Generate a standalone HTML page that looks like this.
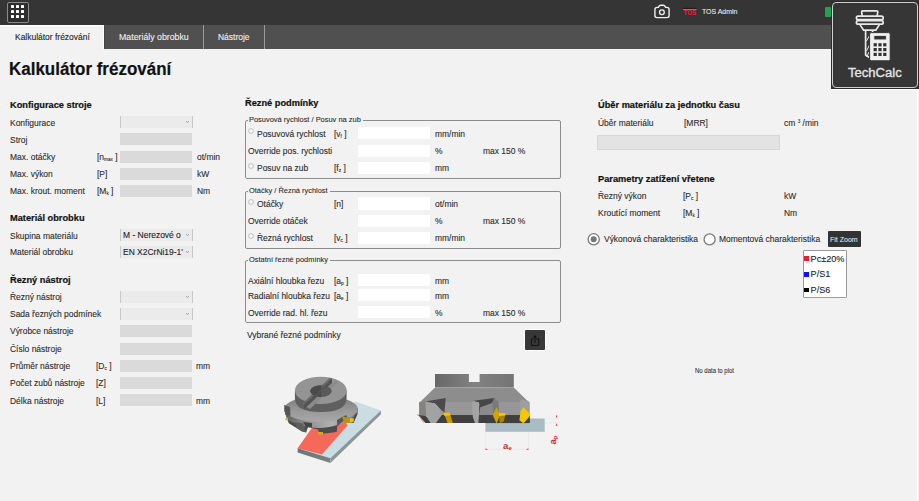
<!DOCTYPE html>
<html><head><meta charset="utf-8"><style>
html,body{margin:0;padding:0;width:919px;height:501px;overflow:hidden;background:#f2f2f2;}
body{position:relative;font-family:"Liberation Sans",sans-serif;}
.t{position:absolute;white-space:nowrap;transform-origin:0 0;-webkit-text-stroke:0.1px currentColor;}
.r{position:absolute;}
sub{font-size:55%;vertical-align:-1px;line-height:0;}
sup{font-size:55%;vertical-align:3px;line-height:0;}
svg{overflow:visible}
</style></head><body>
<div class="r" style="left:0.00px;top:0.00px;width:919.00px;height:24.50px;background:#353535;"></div>
<div class="r" style="left:0.00px;top:24.50px;width:919.00px;height:24.00px;background:#505050;"></div>
<div class="r" style="left:7.00px;top:1.50px;width:22.00px;height:21.00px;border:1.3px solid #8a8a8a;border-radius:2px;box-sizing:border-box;background:#2e2e2e;"></div>
<div class="r" style="left:11.00px;top:5.00px;width:3.00px;height:3.00px;background:#fff;border-radius:0.6px;"></div>
<div class="r" style="left:11.00px;top:10.00px;width:3.00px;height:3.00px;background:#fff;border-radius:0.6px;"></div>
<div class="r" style="left:11.00px;top:15.00px;width:3.00px;height:3.00px;background:#fff;border-radius:0.6px;"></div>
<div class="r" style="left:16.00px;top:5.00px;width:3.00px;height:3.00px;background:#fff;border-radius:0.6px;"></div>
<div class="r" style="left:16.00px;top:10.00px;width:3.00px;height:3.00px;background:#fff;border-radius:0.6px;"></div>
<div class="r" style="left:16.00px;top:15.00px;width:3.00px;height:3.00px;background:#fff;border-radius:0.6px;"></div>
<div class="r" style="left:21.00px;top:5.00px;width:3.00px;height:3.00px;background:#fff;border-radius:0.6px;"></div>
<div class="r" style="left:21.00px;top:10.00px;width:3.00px;height:3.00px;background:#fff;border-radius:0.6px;"></div>
<div class="r" style="left:21.00px;top:15.00px;width:3.00px;height:3.00px;background:#fff;border-radius:0.6px;"></div>
<div class="r" style="left:0.00px;top:24.50px;width:104.30px;height:24.10px;background:#f2f2f2;border-top:1px solid #fff;border-right:1px solid #fff;box-sizing:border-box;"></div>
<div class="r" style="left:104.30px;top:24.50px;width:1.20px;height:24.10px;background:#454545;"></div>
<div class="r" style="left:203.00px;top:24.50px;width:1.00px;height:24.00px;background:#9a9a9a;"></div>
<div class="r" style="left:264.00px;top:24.50px;width:1.00px;height:24.00px;background:#9a9a9a;"></div>
<div class="t" style="left:14.70px;top:31.78px;font-size:9px;line-height:10.8px;color:#222;transform:scaleX(0.94);">Kalkulátor frézování</div>
<div class="t" style="left:118.70px;top:31.78px;font-size:9px;line-height:10.8px;color:#f0f0f0;transform:scaleX(0.975);">Materiály obrobku</div>
<div class="t" style="left:218.20px;top:31.78px;font-size:9px;line-height:10.8px;color:#f0f0f0;transform:scaleX(0.94);">Nástroje</div>
<div class="r" style="left:0.00px;top:48.50px;width:919.00px;height:452.50px;background:#f2f2f2;"></div>
<div class="r" style="left:917.00px;top:89.00px;width:1.00px;height:412.00px;background:#ffffff;"></div>
<div class="r" style="left:830.00px;top:89.00px;width:89.00px;height:1.00px;background:#ffffff;"></div>
<div class="t" style="left:8.80px;top:59.06px;font-size:18px;line-height:21.6px;font-weight:bold;-webkit-text-stroke:0.2px currentColor;color:#111;transform:scaleX(0.943);">Kalkulátor frézování</div>
<div class="t" style="left:10.40px;top:98.82px;font-size:9.7px;line-height:11.64px;font-weight:bold;-webkit-text-stroke:0.2px currentColor;color:#111;transform:scaleX(0.955);">Konfigurace stroje</div>
<div class="t" style="left:10.30px;top:117.58px;font-size:9px;line-height:10.8px;color:#2b2b2b;transform:scaleX(0.94);">Konfigurace</div>
<div class="r" style="left:120.30px;top:116.30px;width:72.30px;height:12.00px;background:#ebebeb;border-left:1px solid #c8c8c8;border-right:1px solid #c8c8c8;box-sizing:border-box;"></div>
<div class="r" style="left:186px;top:121.30px;width:3px;height:2px;"><svg width="3" height="2" style="display:block"><path d="M0 0 L1.5 1.6 L3 0" stroke="#888" stroke-width="0.7" fill="none"/></svg></div>
<div class="t" style="left:10.30px;top:134.68px;font-size:9px;line-height:10.8px;color:#2b2b2b;transform:scaleX(0.94);">Stroj</div>
<div class="r" style="left:120.30px;top:133.40px;width:72.10px;height:12.00px;background:#dadada;"></div>
<div class="t" style="left:10.30px;top:152.08px;font-size:9px;line-height:10.8px;color:#2b2b2b;transform:scaleX(0.94);">Max. otáčky</div>
<div class="t" style="left:96.70px;top:152.08px;font-size:9px;line-height:10.8px;color:#2b2b2b;transform:scaleX(0.94);">[n<sub>max</sub> ]</div>
<div class="t" style="left:197.10px;top:152.08px;font-size:9px;line-height:10.8px;color:#2b2b2b;transform:scaleX(0.94);">ot/min</div>
<div class="r" style="left:120.30px;top:150.80px;width:72.10px;height:12.00px;background:#dadada;"></div>
<div class="t" style="left:10.30px;top:169.08px;font-size:9px;line-height:10.8px;color:#2b2b2b;transform:scaleX(0.94);">Max. výkon</div>
<div class="t" style="left:96.70px;top:169.08px;font-size:9px;line-height:10.8px;color:#2b2b2b;transform:scaleX(0.94);">[P]</div>
<div class="t" style="left:197.10px;top:169.08px;font-size:9px;line-height:10.8px;color:#2b2b2b;transform:scaleX(0.94);">kW</div>
<div class="r" style="left:120.30px;top:167.80px;width:72.10px;height:12.00px;background:#dadada;"></div>
<div class="t" style="left:10.30px;top:186.38px;font-size:9px;line-height:10.8px;color:#2b2b2b;transform:scaleX(0.94);">Max. krout. moment</div>
<div class="t" style="left:96.70px;top:186.38px;font-size:9px;line-height:10.8px;color:#2b2b2b;transform:scaleX(0.94);">[M<sub>k</sub> ]</div>
<div class="t" style="left:197.10px;top:186.38px;font-size:9px;line-height:10.8px;color:#2b2b2b;transform:scaleX(0.94);">Nm</div>
<div class="r" style="left:120.30px;top:185.10px;width:72.10px;height:12.00px;background:#dadada;"></div>
<div class="t" style="left:10.40px;top:212.32px;font-size:9.7px;line-height:11.64px;font-weight:bold;-webkit-text-stroke:0.2px currentColor;color:#111;transform:scaleX(0.955);">Materiál obrobku</div>
<div class="t" style="left:10.30px;top:230.68px;font-size:9px;line-height:10.8px;color:#2b2b2b;transform:scaleX(0.94);">Skupina materiálu</div>
<div class="r" style="left:120.30px;top:229.40px;width:72.30px;height:12.00px;background:#ebebeb;border-left:1px solid #c8c8c8;border-right:1px solid #c8c8c8;box-sizing:border-box;"></div>
<div class="r" style="left:186px;top:234.40px;width:3px;height:2px;"><svg width="3" height="2" style="display:block"><path d="M0 0 L1.5 1.6 L3 0" stroke="#888" stroke-width="0.7" fill="none"/></svg></div>
<div class="t" style="left:122.50px;top:230.08px;font-size:9px;line-height:10.8px;color:#222;transform:scaleX(0.94);">M - Nerezové o</div>
<div class="t" style="left:10.30px;top:247.38px;font-size:9px;line-height:10.8px;color:#2b2b2b;transform:scaleX(0.94);">Materiál obrobku</div>
<div class="r" style="left:120.30px;top:246.10px;width:72.30px;height:12.00px;background:#ebebeb;border-left:1px solid #c8c8c8;border-right:1px solid #c8c8c8;box-sizing:border-box;"></div>
<div class="r" style="left:186px;top:251.10px;width:3px;height:2px;"><svg width="3" height="2" style="display:block"><path d="M0 0 L1.5 1.6 L3 0" stroke="#888" stroke-width="0.7" fill="none"/></svg></div>
<div class="t" style="left:122.50px;top:246.78px;font-size:9px;line-height:10.8px;color:#222;transform:scaleX(0.94);">EN X2CrNi19-1'</div>
<div class="t" style="left:10.40px;top:273.82px;font-size:9.7px;line-height:11.64px;font-weight:bold;-webkit-text-stroke:0.2px currentColor;color:#111;transform:scaleX(0.955);">Řezný nástroj</div>
<div class="t" style="left:10.30px;top:292.03px;font-size:9px;line-height:10.8px;color:#2b2b2b;transform:scaleX(0.94);">Řezný nástroj</div>
<div class="r" style="left:120.30px;top:290.75px;width:72.30px;height:12.00px;background:#ebebeb;border-left:1px solid #c8c8c8;border-right:1px solid #c8c8c8;box-sizing:border-box;"></div>
<div class="r" style="left:186px;top:295.75px;width:3px;height:2px;"><svg width="3" height="2" style="display:block"><path d="M0 0 L1.5 1.6 L3 0" stroke="#888" stroke-width="0.7" fill="none"/></svg></div>
<div class="t" style="left:10.30px;top:309.28px;font-size:9px;line-height:10.8px;color:#2b2b2b;transform:scaleX(0.94);">Sada řezných podmínek</div>
<div class="r" style="left:120.30px;top:308.00px;width:72.30px;height:12.00px;background:#ebebeb;border-left:1px solid #c8c8c8;border-right:1px solid #c8c8c8;box-sizing:border-box;"></div>
<div class="r" style="left:186px;top:313.00px;width:3px;height:2px;"><svg width="3" height="2" style="display:block"><path d="M0 0 L1.5 1.6 L3 0" stroke="#888" stroke-width="0.7" fill="none"/></svg></div>
<div class="t" style="left:10.30px;top:326.28px;font-size:9px;line-height:10.8px;color:#2b2b2b;transform:scaleX(0.94);">Výrobce nástroje</div>
<div class="r" style="left:120.30px;top:325.00px;width:72.10px;height:12.00px;background:#dadada;"></div>
<div class="t" style="left:10.30px;top:343.78px;font-size:9px;line-height:10.8px;color:#2b2b2b;transform:scaleX(0.94);">Číslo nástroje</div>
<div class="r" style="left:120.30px;top:342.50px;width:72.10px;height:12.00px;background:#dadada;"></div>
<div class="t" style="left:10.30px;top:361.28px;font-size:9px;line-height:10.8px;color:#2b2b2b;transform:scaleX(0.94);">Průměr nástroje</div>
<div class="t" style="left:96.30px;top:361.28px;font-size:9px;line-height:10.8px;color:#2b2b2b;transform:scaleX(0.94);">[D<sub>c</sub> ]</div>
<div class="t" style="left:196.30px;top:361.28px;font-size:9px;line-height:10.8px;color:#2b2b2b;transform:scaleX(0.94);">mm</div>
<div class="r" style="left:120.30px;top:360.00px;width:72.10px;height:12.00px;background:#dadada;"></div>
<div class="t" style="left:10.30px;top:378.28px;font-size:9px;line-height:10.8px;color:#2b2b2b;transform:scaleX(0.94);">Počet zubů nástroje</div>
<div class="t" style="left:96.30px;top:378.28px;font-size:9px;line-height:10.8px;color:#2b2b2b;transform:scaleX(0.94);">[Z]</div>
<div class="r" style="left:120.30px;top:377.00px;width:72.10px;height:12.00px;background:#dadada;"></div>
<div class="t" style="left:10.30px;top:395.53px;font-size:9px;line-height:10.8px;color:#2b2b2b;transform:scaleX(0.94);">Délka nástroje</div>
<div class="t" style="left:96.30px;top:395.53px;font-size:9px;line-height:10.8px;color:#2b2b2b;transform:scaleX(0.94);">[L]</div>
<div class="t" style="left:196.30px;top:395.53px;font-size:9px;line-height:10.8px;color:#2b2b2b;transform:scaleX(0.94);">mm</div>
<div class="r" style="left:120.30px;top:394.25px;width:72.10px;height:12.00px;background:#dadada;"></div>
<div class="t" style="left:245.40px;top:96.72px;font-size:9.7px;line-height:11.64px;font-weight:bold;-webkit-text-stroke:0.2px currentColor;color:#111;transform:scaleX(0.955);">Řezné podmínky</div>
<div class="r" style="left:245.20px;top:120.30px;width:316.00px;height:58.30px;border:1px solid #8c8c8c;border-radius:2px;box-sizing:border-box;"></div>
<div class="r" style="left:248.00px;top:117.30px;width:114.70px;height:6.00px;background:#f2f2f2;"></div>
<div class="t" style="left:249.40px;top:115.33px;font-size:8px;line-height:9.6px;color:#2b2b2b;transform:scaleX(0.931);">Posuvová rychlost / Posuv na zub</div>
<svg class="r" style="left:248.30px;top:128.30px" width="6" height="6"><circle cx="3" cy="3" r="2.4" fill="#fafafa" stroke="#9a9a9a" stroke-width="0.6"/></svg>
<div class="t" style="left:256.90px;top:129.08px;font-size:9px;line-height:10.8px;color:#2b2b2b;transform:scaleX(0.94);">Posuvová rychlost</div>
<div class="t" style="left:333.80px;top:129.08px;font-size:9px;line-height:10.8px;color:#2b2b2b;transform:scaleX(0.94);">[v<sub>f</sub> ]</div>
<div class="r" style="left:358.40px;top:127.20px;width:71.60px;height:12.20px;background:#ffffff;"></div>
<div class="t" style="left:435.00px;top:129.08px;font-size:9px;line-height:10.8px;color:#2b2b2b;transform:scaleX(0.94);">mm/min</div>
<div class="t" style="left:247.90px;top:146.18px;font-size:9px;line-height:10.8px;color:#2b2b2b;transform:scaleX(0.94);">Override pos. rychlosti</div>
<div class="r" style="left:358.40px;top:144.70px;width:71.60px;height:12.20px;background:#ffffff;"></div>
<div class="t" style="left:435.00px;top:146.18px;font-size:9px;line-height:10.8px;color:#2b2b2b;transform:scaleX(0.94);">%</div>
<div class="t" style="left:482.90px;top:146.18px;font-size:9px;line-height:10.8px;color:#2b2b2b;transform:scaleX(0.94);">max 150 %</div>
<svg class="r" style="left:248.30px;top:162.60px" width="6" height="6"><circle cx="3" cy="3" r="2.4" fill="#fafafa" stroke="#9a9a9a" stroke-width="0.6"/></svg>
<div class="t" style="left:256.90px;top:163.28px;font-size:9px;line-height:10.8px;color:#2b2b2b;transform:scaleX(0.94);">Posuv na zub</div>
<div class="t" style="left:333.80px;top:163.28px;font-size:9px;line-height:10.8px;color:#2b2b2b;transform:scaleX(0.94);">[f<sub>z</sub> ]</div>
<div class="r" style="left:358.40px;top:162.00px;width:71.60px;height:12.20px;background:#ffffff;"></div>
<div class="t" style="left:435.00px;top:163.28px;font-size:9px;line-height:10.8px;color:#2b2b2b;transform:scaleX(0.94);">mm</div>
<div class="r" style="left:245.20px;top:190.80px;width:316.00px;height:57.80px;border:1px solid #8c8c8c;border-radius:2px;box-sizing:border-box;"></div>
<div class="r" style="left:248.00px;top:187.80px;width:81.60px;height:6.00px;background:#f2f2f2;"></div>
<div class="t" style="left:249.40px;top:185.83px;font-size:8px;line-height:9.6px;color:#2b2b2b;transform:scaleX(0.931);">Otáčky / Řezná rychlost</div>
<svg class="r" style="left:248.30px;top:198.50px" width="6" height="6"><circle cx="3" cy="3" r="2.4" fill="#fafafa" stroke="#9a9a9a" stroke-width="0.6"/></svg>
<div class="t" style="left:256.90px;top:199.08px;font-size:9px;line-height:10.8px;color:#2b2b2b;transform:scaleX(0.94);">Otáčky</div>
<div class="t" style="left:333.80px;top:199.08px;font-size:9px;line-height:10.8px;color:#2b2b2b;transform:scaleX(0.94);">[n]</div>
<div class="r" style="left:358.40px;top:197.40px;width:71.60px;height:12.20px;background:#ffffff;"></div>
<div class="t" style="left:435.00px;top:199.08px;font-size:9px;line-height:10.8px;color:#2b2b2b;transform:scaleX(0.94);">ot/min</div>
<div class="t" style="left:247.90px;top:215.98px;font-size:9px;line-height:10.8px;color:#2b2b2b;transform:scaleX(0.94);">Override otáček</div>
<div class="r" style="left:358.40px;top:214.50px;width:71.60px;height:12.20px;background:#ffffff;"></div>
<div class="t" style="left:435.00px;top:215.98px;font-size:9px;line-height:10.8px;color:#2b2b2b;transform:scaleX(0.94);">%</div>
<div class="t" style="left:482.90px;top:215.98px;font-size:9px;line-height:10.8px;color:#2b2b2b;transform:scaleX(0.94);">max 150 %</div>
<svg class="r" style="left:248.30px;top:233.00px" width="6" height="6"><circle cx="3" cy="3" r="2.4" fill="#fafafa" stroke="#9a9a9a" stroke-width="0.6"/></svg>
<div class="t" style="left:256.90px;top:233.38px;font-size:9px;line-height:10.8px;color:#2b2b2b;transform:scaleX(0.94);">Řezná rychlost</div>
<div class="t" style="left:333.80px;top:233.38px;font-size:9px;line-height:10.8px;color:#2b2b2b;transform:scaleX(0.94);">[v<sub>c</sub> ]</div>
<div class="r" style="left:358.40px;top:231.90px;width:71.60px;height:12.20px;background:#ffffff;"></div>
<div class="t" style="left:435.00px;top:233.38px;font-size:9px;line-height:10.8px;color:#2b2b2b;transform:scaleX(0.94);">mm/min</div>
<div class="r" style="left:245.20px;top:259.60px;width:316.00px;height:63.60px;border:1px solid #8c8c8c;border-radius:2px;box-sizing:border-box;"></div>
<div class="r" style="left:248.00px;top:256.60px;width:82.00px;height:6.00px;background:#f2f2f2;"></div>
<div class="t" style="left:249.40px;top:254.63px;font-size:8px;line-height:9.6px;color:#2b2b2b;transform:scaleX(0.931);">Ostatní řezné podmínky</div>
<div class="t" style="left:247.90px;top:276.38px;font-size:9px;line-height:10.8px;color:#2b2b2b;transform:scaleX(0.94);">Axiální hloubka řezu</div>
<div class="t" style="left:333.80px;top:276.38px;font-size:9px;line-height:10.8px;color:#2b2b2b;transform:scaleX(0.94);">[a<sub>p</sub> ]</div>
<div class="r" style="left:358.40px;top:274.30px;width:71.60px;height:12.20px;background:#ffffff;"></div>
<div class="t" style="left:435.00px;top:276.38px;font-size:9px;line-height:10.8px;color:#2b2b2b;transform:scaleX(0.94);">mm</div>
<div class="t" style="left:247.90px;top:290.98px;font-size:9px;line-height:10.8px;color:#2b2b2b;transform:scaleX(0.94);">Radialní hloubka řezu</div>
<div class="t" style="left:333.80px;top:290.98px;font-size:9px;line-height:10.8px;color:#2b2b2b;transform:scaleX(0.94);">[a<sub>e</sub> ]</div>
<div class="r" style="left:358.40px;top:289.30px;width:71.60px;height:12.20px;background:#ffffff;"></div>
<div class="t" style="left:435.00px;top:290.98px;font-size:9px;line-height:10.8px;color:#2b2b2b;transform:scaleX(0.94);">mm</div>
<div class="t" style="left:247.90px;top:308.28px;font-size:9px;line-height:10.8px;color:#2b2b2b;transform:scaleX(0.94);">Override rad. hl. řezu</div>
<div class="r" style="left:358.40px;top:306.30px;width:71.60px;height:12.20px;background:#ffffff;"></div>
<div class="t" style="left:435.00px;top:308.28px;font-size:9px;line-height:10.8px;color:#2b2b2b;transform:scaleX(0.94);">%</div>
<div class="t" style="left:482.90px;top:308.28px;font-size:9px;line-height:10.8px;color:#2b2b2b;transform:scaleX(0.94);">max 150 %</div>
<div class="t" style="left:247.40px;top:330.48px;font-size:9px;line-height:10.8px;color:#2b2b2b;transform:scaleX(0.94);">Vybrané řezné podmínky</div>
<div class="r" style="left:524.00px;top:329.00px;width:22.00px;height:22.00px;background:#ffffff;border-radius:2px;"></div>
<div class="r" style="left:525.00px;top:330.00px;width:20.00px;height:20.00px;background:#383838;border-radius:1px;"></div>
<svg class="r" style="left:525px;top:330px" width="20" height="20"><path d="M8.6 9 L6.3 9 L6.3 15.4 L13.8 15.4 L13.8 9 L11.4 9 M10 13 L10 6" stroke="#111" stroke-width="1" fill="none"/><path d="M8 7.4 L10 4.9 L12 7.4 Z" fill="#111"/></svg>
<div class="t" style="left:597.60px;top:99.32px;font-size:9.7px;line-height:11.64px;font-weight:bold;-webkit-text-stroke:0.2px currentColor;color:#111;transform:scaleX(0.955);">Úběr materiálu za jednotku času</div>
<div class="t" style="left:597.60px;top:117.78px;font-size:9px;line-height:10.8px;color:#2b2b2b;transform:scaleX(0.94);">Úběr materiálu</div>
<div class="t" style="left:683.60px;top:117.78px;font-size:9px;line-height:10.8px;color:#2b2b2b;transform:scaleX(0.94);">[MRR]</div>
<div class="t" style="left:783.70px;top:117.78px;font-size:9px;line-height:10.8px;color:#2b2b2b;transform:scaleX(0.94);">cm <sup>3</sup> /min</div>
<div class="r" style="left:597.20px;top:135.30px;width:182.60px;height:14.50px;background:#e3e3e3;border:1px solid #d6d6d6;box-sizing:border-box;"></div>
<div class="t" style="left:598.00px;top:173.02px;font-size:9.7px;line-height:11.64px;font-weight:bold;-webkit-text-stroke:0.2px currentColor;color:#111;transform:scaleX(0.955);">Parametry zatížení vřetene</div>
<div class="t" style="left:598.00px;top:190.78px;font-size:9px;line-height:10.8px;color:#2b2b2b;transform:scaleX(0.94);">Řezný výkon</div>
<div class="t" style="left:682.80px;top:190.78px;font-size:9px;line-height:10.8px;color:#2b2b2b;transform:scaleX(0.94);">[P<sub>c</sub> ]</div>
<div class="t" style="left:784.00px;top:190.78px;font-size:9px;line-height:10.8px;color:#2b2b2b;transform:scaleX(0.94);">kW</div>
<div class="t" style="left:598.00px;top:207.78px;font-size:9px;line-height:10.8px;color:#2b2b2b;transform:scaleX(0.94);">Kroutící moment</div>
<div class="t" style="left:682.80px;top:207.78px;font-size:9px;line-height:10.8px;color:#2b2b2b;transform:scaleX(0.94);">[M<sub>k</sub> ]</div>
<div class="t" style="left:784.00px;top:207.78px;font-size:9px;line-height:10.8px;color:#2b2b2b;transform:scaleX(0.94);">Nm</div>
<svg class="r" style="left:586px;top:231px" width="16" height="16"><circle cx="7.7" cy="8.3" r="5.6" fill="#fdfdfd" stroke="#7a7a7a" stroke-width="1.3"/><circle cx="7.7" cy="8.3" r="3" fill="#777"/></svg>
<div class="t" style="left:603.50px;top:234.48px;font-size:9px;line-height:10.8px;color:#2b2b2b;transform:scaleX(0.94);">Výkonová charakteristika</div>
<svg class="r" style="left:701px;top:231px" width="16" height="16"><circle cx="8.6" cy="8.4" r="5.5" fill="#fdfdfd" stroke="#7a7a7a" stroke-width="1.3"/></svg>
<div class="t" style="left:719.40px;top:234.48px;font-size:9px;line-height:10.8px;color:#2b2b2b;transform:scaleX(0.94);">Momentová charakteristika</div>
<div class="r" style="left:828.00px;top:230.80px;width:32.80px;height:16.70px;background:#333;border-radius:1px;"></div>
<div class="t" style="left:829.60px;top:235.50px;font-size:7.4px;line-height:8.88px;color:#f4f4f4;transform:scaleX(0.95);-webkit-text-stroke:0;">Fit Zoom</div>
<div class="r" style="left:802.60px;top:250.00px;width:44.00px;height:47.70px;background:#fff;border:1px solid #9a9a9a;border-radius:1px;box-sizing:border-box;"></div>
<div class="r" style="left:804.40px;top:256.00px;width:4.50px;height:4.60px;background:#e8202a;"></div>
<div class="r" style="left:804.40px;top:272.30px;width:4.50px;height:4.50px;background:#1010ee;"></div>
<div class="r" style="left:804.40px;top:288.10px;width:4.50px;height:4.00px;background:#000;"></div>
<div class="t" style="left:810.60px;top:253.79px;font-size:9.1px;line-height:10.92px;color:#222;">Pc±20%</div>
<div class="t" style="left:810.60px;top:269.39px;font-size:9.1px;line-height:10.92px;color:#222;">P/S1</div>
<div class="t" style="left:810.60px;top:284.89px;font-size:9.1px;line-height:10.92px;color:#222;">P/S6</div>
<div class="t" style="left:695.20px;top:366.77px;font-size:6.9px;line-height:8.28px;color:#333;transform:scaleX(0.87);">No data to plot</div>
<svg class="r" style="left:270px;top:360px" width="120" height="105" viewBox="0 0 120 105">
<defs>
<linearGradient id="gside" x1="0" x2="1" y1="0" y2="0">
<stop offset="0" stop-color="#5e5e5e"/><stop offset="0.3" stop-color="#8e8e8e"/><stop offset="0.65" stop-color="#b2b2b2"/><stop offset="0.9" stop-color="#8a8a8a"/><stop offset="1" stop-color="#666"/>
</linearGradient>
<linearGradient id="gring" x1="0" x2="0" y1="0" y2="1">
<stop offset="0" stop-color="#7a7a7a"/><stop offset="0.6" stop-color="#9a9a9a"/><stop offset="1" stop-color="#a8a8a8"/>
</linearGradient>
<linearGradient id="gplate" x1="0" x2="0" y1="0" y2="1">
<stop offset="0" stop-color="#6a7274"/><stop offset="1" stop-color="#7a8486"/>
</linearGradient>
</defs>
<!-- plate -->
<polygon points="27.6,88.3 85.5,41.5 110.8,50.6 60.4,98.2" fill="#c9dde3"/>
<polygon points="27.6,88.3 60.4,98.2 60.4,103 27.6,92.4" fill="url(#gplate)"/>
<polygon points="60.4,98.2 110.8,50.6 110.8,54.6 60.4,103" fill="#8a9698"/>
<polygon points="27.6,88.3 51.9,94.6 77.5,65.4 73,58 46,62" fill="#f4695a"/>
<!-- bottom band -->
<polygon points="14,48 14,50 18.8,63.2 31.7,71.3 36.2,72.6 38,67 47.9,69.4 49.8,73.9 66.7,72 67.3,66.1 73.2,61 83.6,62.9 87.4,54.5 88,48" fill="#4c4c4c"/>
<!-- flange cone -->
<path d="M14 48 L17.5 60 Q44 73.5 70 64 L84 57 L88 48 Z" fill="url(#gside)"/>
<!-- flange top ring -->
<ellipse cx="51" cy="49" rx="37" ry="13" fill="url(#gring)"/>
<!-- notches in bottom band -->
<polygon points="14,45 20,47 20.5,56 15.5,55" fill="#555"/>
<polygon points="25,62 33,63.5 36.2,72.6 31.7,71.3 27,68" fill="#5e5e5e"/>
<polygon points="33,62 42,63 42,67.5 36,67" fill="#444"/>
<polygon points="67,60 76,55 80,62 73.2,61 67.3,66.1" fill="#555"/>
<!-- hub side -->
<path d="M24.9 30.4 L24.9 38 Q24.9 52 50.8 52 Q76.6 52 76.6 38 L76.6 30.4 Z" fill="#5f5f5f"/>
<!-- hub top -->
<ellipse cx="50.8" cy="30.4" rx="25.9" ry="13.7" fill="#949494"/>
<!-- slot -->
<polygon points="31.5,44.2 59.5,18 62,18.5 34.5,44.5" fill="#6a6a6a"/>
<polygon points="34.5,44.5 62,18.5 62,22.8 34.5,49" fill="#505050"/>
<polygon points="36,47 66,20 68,22 40,49" fill="#8a8a8a"/>
<!-- center hole -->
<ellipse cx="51" cy="31.1" rx="10.8" ry="5.8" fill="#5a5a5a"/>
<path d="M40.2 31.1 A10.8 5.8 0 0 1 51 25.3 L51 36.9 A10.8 5.8 0 0 1 40.2 31.1 Z" fill="#4a4a4a"/>
<polygon points="34.5,44.5 62,18.5 62,22.8 34.5,49" fill="#555" opacity="0.6"/>
<!-- inserts -->
<polygon points="72,56 80,58.5 80,63 74,63" fill="#b8940e"/>
<polygon points="80,58 84,58.5 83.5,62 80,62" fill="#e8c020"/>
<rect x="48" y="72" width="5" height="2.6" fill="#d0aa18"/>
<rect x="15.5" y="58" width="2.5" height="2.3" fill="#d4b020"/>
</svg>
<svg class="r" style="left:410px;top:365px" width="160" height="95" viewBox="0 0 160 95">
<defs>
<linearGradient id="ghub" x1="0" x2="1" y1="0" y2="0">
<stop offset="0" stop-color="#686868"/><stop offset="0.5" stop-color="#828282"/><stop offset="1" stop-color="#747474"/>
</linearGradient>
</defs>
<!-- workpiece -->
<rect x="75.4" y="57.8" width="59.3" height="9" fill="#a9bcc3"/>
<rect x="117.6" y="53.5" width="17.1" height="4.5" fill="#a9bcc3"/>
<line x1="75.4" y1="57.8" x2="117.6" y2="57.8" stroke="#b07050" stroke-width="0.5"/>
<!-- hub -->
<path d="M25 9 L58.9 9 L58.9 17 L69.6 17 L69.6 9 L103.8 9 L103.8 22.4 L25 22.4 Z" fill="url(#ghub)"/>
<!-- body -->
<polygon points="25,22.4 103.8,22.4 119.4,37.7 119.4,49.4 9.3,49.4 9.3,37.7" fill="#8d8d8d"/>
<rect x="9.3" y="37" width="110.1" height="13" fill="#979797"/>
<!-- bottom band -->
<polygon points="8.3,50 119.9,50 119.9,57.9 15.4,57.9" fill="#404040"/>
<!-- pockets -->
<polygon points="9.3,37 16,36.5 16.1,51.3 9.3,50" fill="#828282"/>
<polygon points="19.4,35.7 35.7,33 34.4,47.4 31.1,44.8 24.6,38.3 16.1,37" fill="#4a4a4a"/>
<path d="M15.4 37 L24.6 38.3 Q30 42 31.8 50 L25.9 57.9 L20.7 57.9 L16.1 51.3 Z" fill="#a2a2a2"/>
<polygon points="63.7,35.7 84.6,33 82,38.3 70.3,42.8 69,37.6" fill="#474747"/>
<polygon points="69,42.8 82,38.3 83.3,50 69,50" fill="#8a8a8a"/>
<polygon points="69,37.6 70.3,42.8 69,50 68.5,45" fill="#555"/>
<path d="M62.4 36.3 L69 37.6 L69 50 L68.3 57.9 L65 57.9 Q62 52 62.4 46.1 Z" fill="#a4a4a4"/>
<polygon points="84,33 88.6,37 88.6,50 83.3,50 82,38.3" fill="#7a7a7a"/>
<polygon points="110.1,34.4 118.6,36 118.6,50 110.1,50" fill="#9e9e9e"/>
<!-- inserts -->
<polygon points="33.7,48.1 39.6,47.4 42.9,57.9 37.6,57.9" fill="#c49600"/>
<polygon points="33.7,48.1 39.6,47.4 40.4,50.2 34.5,51" fill="#f2c200"/>
<polygon points="82.7,50 86.6,42.2 89.9,50 86.6,58.5" fill="#d2a400"/>
<polygon points="88.6,48.1 95.7,48.1 93.8,56.6 89.9,57.9" fill="#a88400"/>
<polygon points="88.6,48.1 95.7,48.1 95.2,50.6 89,51" fill="#f4c400"/>
<polygon points="110.7,46.1 113.4,42.2 120.5,49.4 118.6,52.6 113.4,58.5 109.4,55.2" fill="#f7c800"/>
<path d="M7 49.5 L9 50.5 L13.5 57.5" stroke="#c07030" stroke-width="0.7" fill="none"/>
<!-- dimension lines -->
<g stroke="#e4e4e4" stroke-width="0.6">
<line x1="75.4" y1="67" x2="75.4" y2="84.5"/>
<line x1="118.5" y1="67" x2="118.5" y2="84.5"/>
<line x1="134.7" y1="53.5" x2="147.5" y2="53.5"/>
<line x1="134.7" y1="57.8" x2="147.5" y2="57.8"/>
<line x1="75.4" y1="84.3" x2="118.5" y2="84.3"/>
</g>
<g fill="#e02828">
<polygon points="75.5,83.5 78,84.3 75.5,85.1"/>
<polygon points="118.4,83.5 116,84.3 118.4,85.1"/>
<polygon points="145.8,50.5 146.6,53 147.4,50.5"/>
<polygon points="145.8,60.8 146.6,58.3 147.4,60.8"/>
</g>
<text x="93" y="84.3" font-family="Liberation Sans" font-weight="bold" font-size="9.6" fill="#d42a2a">a</text>
<text x="98.4" y="84.5" font-family="Liberation Sans" font-weight="bold" font-size="6" fill="#d42a2a">e</text>
<g transform="translate(146.4,79.6) rotate(-90)"><text x="0" y="0" font-family="Liberation Sans" font-weight="bold" font-size="9.6" fill="#d42a2a">a</text><text x="5.4" y="0.3" font-family="Liberation Sans" font-weight="bold" font-size="6" fill="#d42a2a">p</text></g>
</svg>
<svg class="r" style="left:652px;top:3px" width="20" height="18"><path d="M5 4.4 Q2.9 4.4 2.9 6.6 L2.9 12.6 Q2.9 14.6 5 14.6 L15 14.6 Q17.1 14.6 17.1 12.6 L17.1 6.6 Q17.1 4.4 15 4.4 L13.6 4.4 Q13 2.2 11.4 2.2 L8.6 2.2 Q7 2.2 6.4 4.4 Z" stroke="#f0f0f0" stroke-width="1.4" fill="none"/><circle cx="9.9" cy="9.2" r="2.4" stroke="#f0f0f0" stroke-width="1.3" fill="none"/></svg>
<svg class="r" style="left:682px;top:7px" width="16" height="9"><rect x="1" y="0.9" width="13.5" height="1" fill="#111"/><rect x="1" y="1.9" width="13.5" height="1" fill="#8a8a8a"/><text x="1.5" y="7.9" font-family="Liberation Sans" font-weight="bold" font-size="7" fill="#ee2222" textLength="12.5" lengthAdjust="spacingAndGlyphs">TOS</text></svg>
<div class="t" style="left:702.40px;top:7.50px;font-size:7.4px;line-height:8.88px;color:#ececec;transform:scaleX(0.94);">TOS Admin</div>
<div class="r" style="left:825.20px;top:6.50px;width:5.80px;height:10.10px;background:#1ea452;border-radius:1px;"></div>
<div class="r" style="left:830.50px;top:0.50px;width:88.50px;height:88.50px;background:#2b2b2b;"></div>
<div class="r" style="left:831.80px;top:1.80px;width:85.80px;height:86.40px;border:1.8px solid #cfcfcf;border-radius:4px;background:#363636;box-sizing:border-box;"></div>
<div class="t" style="left:848.00px;top:65.02px;font-size:13.08px;line-height:15.7px;color:#e4e4e4;-webkit-text-stroke:0.35px #e4e4e4;">TechCalc</div>
<svg class="r" style="left:845px;top:5px" width="55" height="60" viewBox="0 0 55 60">
<g fill="none" stroke="#e8e8e8" stroke-width="1.7" stroke-linejoin="round">
<path d="M17.2 10.8 L16.6 6.8 Q16.6 5.8 17.8 5.8 L31.6 5.8 Q32.8 5.8 32.8 6.8 L32.2 10.8"/>
<rect x="11.4" y="11.2" width="26.8" height="3.4" rx="1.7"/>
<rect x="11.4" y="15.6" width="26.8" height="3.6" rx="1.8"/>
<path d="M15 19.6 L18.6 25.2 L30.8 25.2 L34.4 19.6"/>
<path d="M20.6 25.6 L20.6 50 L24.5 52.5 M27.6 25.6 L27.6 27.5"/>
</g>
<g stroke="#e8e8e8" stroke-width="1"><path d="M21.5 36 L26.5 27 M21.5 46 L24.5 40 M21.5 52 L24 47"/></g>
<rect x="24.6" y="27.6" width="20.6" height="28.2" rx="1.6" fill="#f0f0f0" stroke="#333" stroke-width="1"/>
<rect x="28.9" y="30.5" width="12.4" height="4.4" fill="#333" stroke="#f0f0f0" stroke-width="0.8"/>
<g fill="#333">
<rect x="28.6" y="38.2" width="3.2" height="3.2"/><rect x="33.4" y="38.2" width="3.2" height="3.2"/><rect x="38.2" y="38.2" width="3.2" height="3.2"/>
<rect x="28.6" y="43" width="3.2" height="3.2"/><rect x="33.4" y="43" width="3.2" height="3.2"/><rect x="38.2" y="43" width="3.2" height="3.2"/>
<rect x="28.6" y="47.8" width="3.2" height="3.2"/><rect x="33.4" y="47.8" width="3.2" height="3.2"/><rect x="38.2" y="47.8" width="3.2" height="3.2"/>
</g>
</svg>
</body></html>
